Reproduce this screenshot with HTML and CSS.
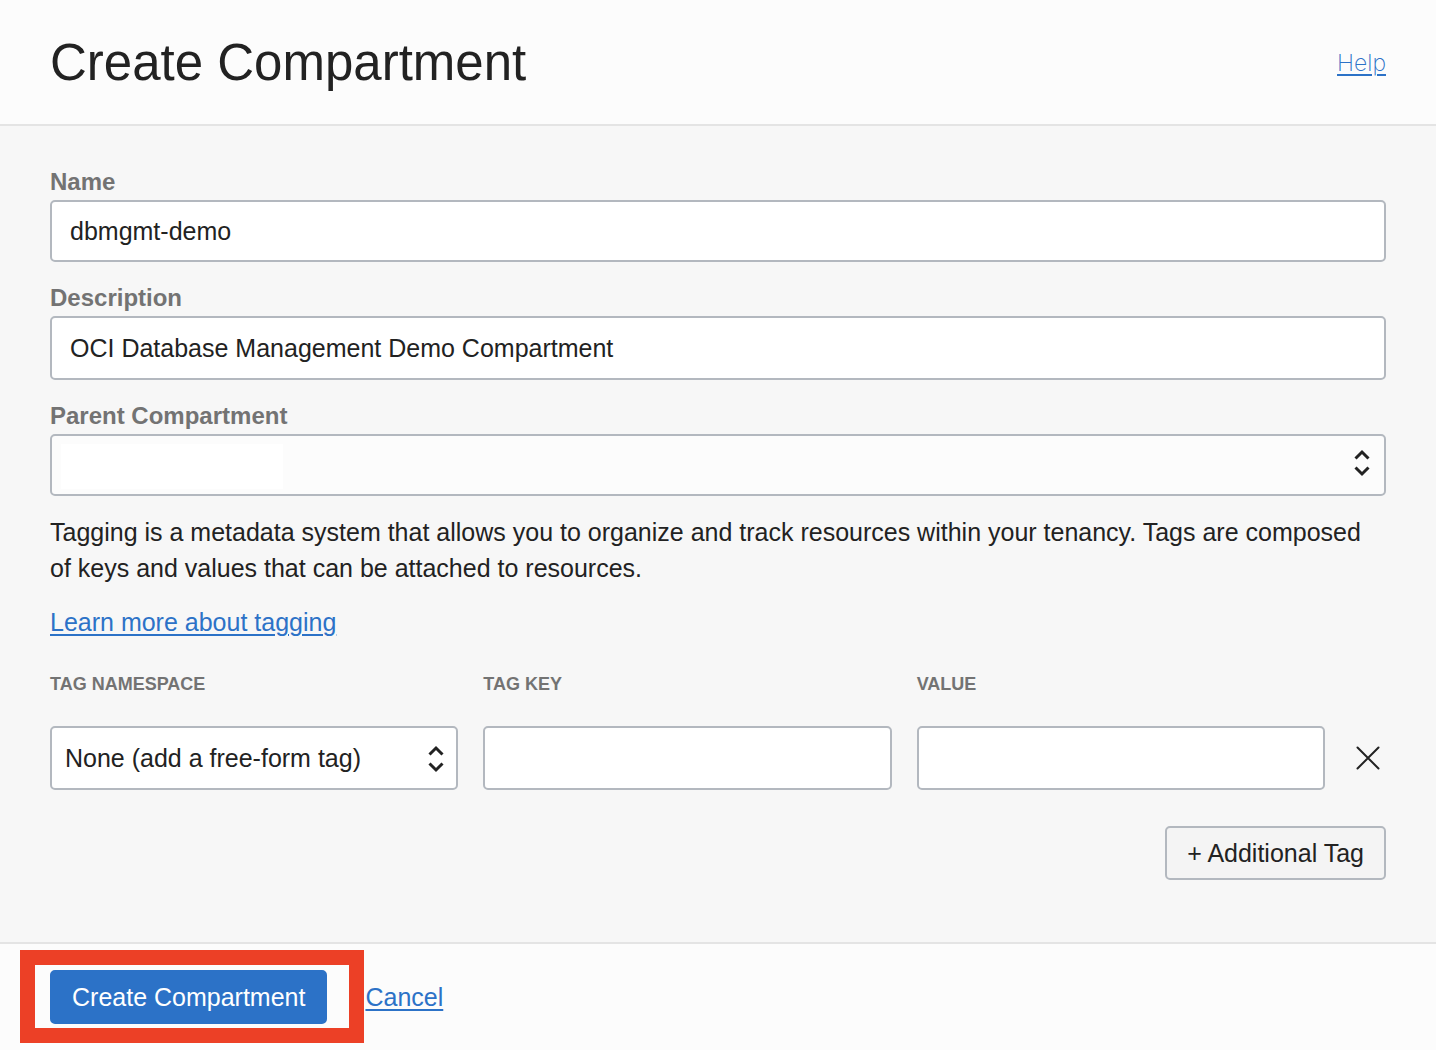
FILE: index.html
```html
<!DOCTYPE html>
<html lang="en">
<head>
<meta charset="utf-8">
<meta name="viewport" content="width=device-width, initial-scale=1">
<title>Create Compartment</title>
<link rel="stylesheet" href="styles.css">
</head>
<body>
<header class="header">
  <h1 class="title">Create Compartment</h1>
  <a class="link help" href="#help">Help</a>
</header>
<form class="form">
  <main class="content">
    <div class="field">
      <label class="label" for="name">Name</label>
      <input class="control" id="name" type="text" value="dbmgmt-demo">
    </div>
    <div class="field">
      <label class="label" for="description">Description</label>
      <input class="control control-tall" id="description" type="text" value="OCI Database Management Demo Compartment">
    </div>
    <div class="field">
      <label class="label" for="parent">Parent Compartment</label>
      <div class="select">
        <select class="control control-muted" id="parent"><option></option></select>
        <span class="redaction"></span>
        <svg class="arrows" viewBox="0 0 18 28" aria-hidden="true"><path d="M2.500 9.500 9 3l6.500 6.500M2.500 18.500 9 25l6.500-6.500"/></svg>
      </div>
    </div>
    <p class="text">Tagging is a metadata system that allows you to organize and track resources within your tenancy. Tags are composed of keys and values that can be attached to resources.</p>
    <p class="text"><a class="link" href="#tagging">Learn more about tagging</a></p>
    <div class="tags">
      <div class="tag-field">
        <label class="tag-label" for="namespace">TAG NAMESPACE</label>
        <div class="select">
          <select class="control control-tall control-compact" id="namespace"><option>None (add a free-form tag)</option></select>
          <svg class="arrows" viewBox="0 0 18 28" aria-hidden="true"><path d="M2.500 9.500 9 3l6.500 6.500M2.500 18.500 9 25l6.500-6.500"/></svg>
        </div>
      </div>
      <div class="tag-field">
        <label class="tag-label" for="key">TAG KEY</label>
        <input class="control control-tall" id="key" type="text">
      </div>
      <div class="tag-field">
        <label class="tag-label" for="value">VALUE</label>
        <input class="control control-tall" id="value" type="text">
      </div>
      <button class="remove" type="button" aria-label="Remove tag">
        <svg class="cross" viewBox="0 0 24 24" aria-hidden="true"><path d="M1.500 1.500l21 21M22.500 1.500l-21 21"/></svg>
      </button>
    </div>
    <div class="actions">
      <button class="button" type="button">+ Additional Tag</button>
    </div>
  </main>
  <footer class="footer">
    <div class="highlighted">
      <button class="button button-primary" type="button">Create Compartment</button>
    </div>
    <a class="link" href="#cancel">Cancel</a>
  </footer>
</form>
</body>
</html>
```
FILE: styles.css
```css
* {
  box-sizing: border-box;
}

body {
  margin: 0;
  min-height: 100vh;
  background: #fcfcfc;
  color: #222;
  font: 25px/36px "Liberation Sans", Arial, sans-serif;
}

.header {
  display: flex;
  align-items: center;
  justify-content: space-between;
  padding: 33px 50px 31px;
  border-bottom: 2px solid #e4e4e4;
}

.title {
  margin: 0;
  font-size: 51px;
  line-height: 60px;
  font-weight: 400;
}

.link {
  color: #2c72c7;
  text-decoration: underline;
  text-decoration-thickness: 2px;
  text-underline-offset: 3px;
}

.help {
  font-family: Inter, "Liberation Sans", sans-serif;
  font-size: 23px;
  font-weight: 200;
}

.content {
  padding: 20px 50px 62px;
  background: #f7f7f7;
  border-bottom: 2px solid #e4e4e4;
}

.field {
  display: flex;
  flex-direction: column;
  gap: 4px;
  padding-top: 22px;
}

.label {
  color: #737373;
  font-size: 24px;
  line-height: 28px;
  font-weight: 700;
}

.control {
  display: block;
  width: 100%;
  height: 62px;
  padding: 0 18px;
  border: 2px solid #b3b8bf;
  border-radius: 5px;
  background: #fff;
  color: inherit;
  font: inherit;
  appearance: none;
}

.control-tall {
  height: 64px;
}

.control-muted {
  background: #fcfcfc;
}

.control-compact {
  padding: 0 13px;
}

.select {
  position: relative;
}

.arrows {
  position: absolute;
  top: 15px;
  right: 15px;
  width: 18px;
  height: 28px;
  fill: none;
  stroke: #222;
  stroke-width: 3;
  pointer-events: none;
}

.control-tall + .arrows {
  top: 19px;
  right: 13px;
}

.redaction {
  position: absolute;
  top: 10px;
  left: 11px;
  width: 222px;
  height: 45px;
  background: #fff;
}

.text {
  margin: 18px 0 0;
}

.tags {
  display: grid;
  grid-template-columns: repeat(3, 1fr) 36px;
  gap: 25px;
  align-items: end;
  margin-top: 32px;
}

.tag-field {
  display: flex;
  flex-direction: column;
  gap: 30px;
}

.tag-label {
  color: #737373;
  font-size: 18px;
  line-height: 24px;
  font-weight: 700;
}

.remove {
  display: flex;
  align-items: center;
  justify-content: center;
  height: 64px;
  padding: 0;
  border: 0;
  background: none;
}

.cross {
  width: 24px;
  height: 24px;
  fill: none;
  stroke: #222;
  stroke-width: 2;
  stroke-linecap: round;
}

.actions {
  display: flex;
  justify-content: flex-end;
  margin-top: 36px;
}

.button {
  height: 54px;
  padding: 0 20px;
  border: 2px solid #b3b8bf;
  border-radius: 5px;
  background: #f4f4f4;
  color: inherit;
  font: inherit;
  white-space: nowrap;
}

.button-primary {
  border-color: #2c72c7;
  background: #2c72c7;
  color: #fff;
}

.footer {
  display: flex;
  align-items: center;
  gap: 38px;
  padding: 26px 50px;
}

.highlighted {
  position: relative;
}

/* Callout frame drawn around the submit button */
.highlighted::after {
  content: "";
  position: absolute;
  inset: -20px -37px -19px -30px;
  border: 15px solid #ec4026;
  pointer-events: none;
}
```
